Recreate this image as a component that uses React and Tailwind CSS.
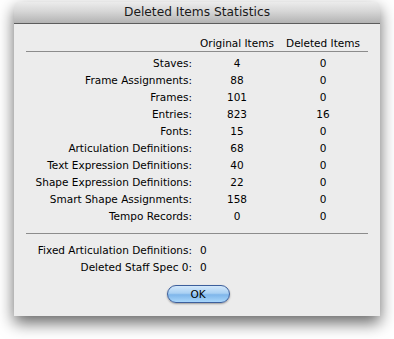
export default function App() {
  const rows = [
    ["Staves:", "4", "0"],
    ["Frame Assignments:", "88", "0"],
    ["Frames:", "101", "0"],
    ["Entries:", "823", "16"],
    ["Fonts:", "15", "0"],
    ["Articulation Definitions:", "68", "0"],
    ["Text Expression Definitions:", "40", "0"],
    ["Shape Expression Definitions:", "22", "0"],
    ["Smart Shape Assignments:", "158", "0"],
    ["Tempo Records:", "0", "0"],
  ];
  const font = { fontFamily: '"DejaVu Sans", "Liberation Sans", sans-serif' };
  return (
    <div className="w-[394px] h-[339px] bg-white overflow-hidden pt-[2px] pl-[14px]" style={font}>
      <div className="w-[366px] h-[314px] flex flex-col rounded-t-[5px] bg-[#ececec] shadow-[0_7px_16px_rgba(0,0,0,0.6)]">
        <div className="h-[22px] shrink-0 rounded-t-[5px] border-b border-[#5c5c5c] bg-[linear-gradient(#ececec,#d6d6d6_45%,#b3b3b3)] flex items-center justify-center text-[12.25px] text-[#1a1a1a]">
          Deleted Items Statistics
        </div>
        <div className="flex flex-col pt-[13px] text-[10.5px] text-black">
          <div className="flex h-[14px] items-center">
            <div className="w-[178px]" />
            <div className="w-[90px] text-center">Original Items</div>
            <div className="w-[82px] text-center">Deleted Items</div>
          </div>
          <div className="mx-[12px] h-px bg-[#8c8c8c]" />
          <div className="mt-[3px] flex flex-col">
            {rows.map(([l, a, b]) => (
              <div key={l} className="flex h-[17px] items-center">
                <div className="w-[178px] text-right">{l}</div>
                <div className="w-[90px] text-center">{a}</div>
                <div className="w-[82px] text-center">{b}</div>
              </div>
            ))}
          </div>
          <div className="mx-[12px] mt-[8px] h-px bg-[#8c8c8c]" />
          <div className="mt-[8px] flex flex-col">
            <div className="flex h-[17px] items-center">
              <div className="w-[178px] text-right">Fixed Articulation Definitions:</div>
              <div className="pl-[8px]">0</div>
            </div>
            <div className="flex h-[17px] items-center">
              <div className="w-[178px] text-right">Deleted Staff Spec 0:</div>
              <div className="pl-[8px]">0</div>
            </div>
          </div>
          <div className="mt-[9px] flex justify-center pl-[2px]">
            <button className="w-[63px] h-[18px] rounded-full border border-[#3d5f9c] bg-[linear-gradient(#d3e8fb,#a9d0f3_45%,#7fb6ea_55%,#a8d6fb)] shadow-[0_1px_2px_rgba(0,0,0,0.35)] text-[10.5px] text-black flex items-center justify-center leading-none">
              OK
            </button>
          </div>
        </div>
      </div>
    </div>
  );
}
